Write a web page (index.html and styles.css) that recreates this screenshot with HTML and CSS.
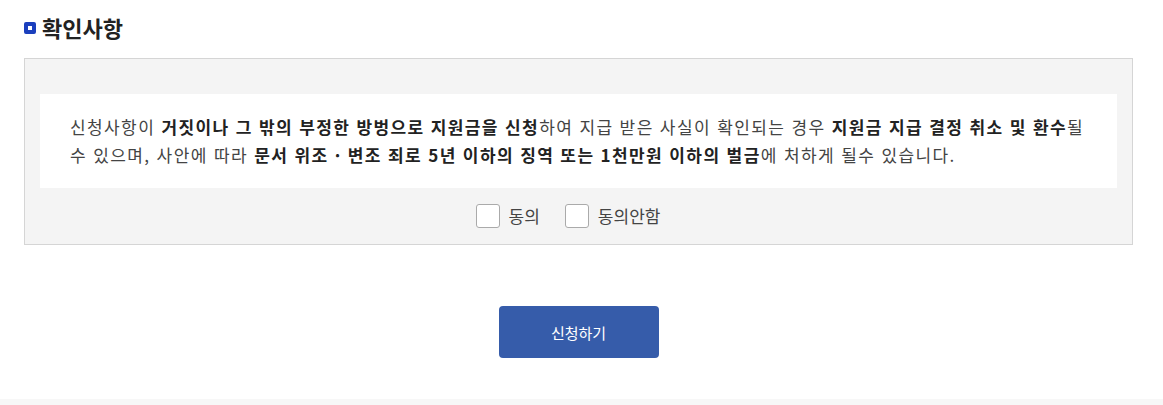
FILE: index.html
```html
<!DOCTYPE html>
<html lang="ko">
<head>
    <meta charset="UTF-8">
    <meta name="viewport" content="width=device-width, initial-scale=1.0">
    <title>확인사항</title>
    <link rel="stylesheet" href="styles.css">
</head>
<body>
    <div class="section">
        <h2 class="section-title"><span class="title-mark"></span>확인사항</h2>
        <div class="confirm-box">
            <p class="confirm-text">
                신청사항이 <b>거짓이나 그 밖의 부정한 방벙으로 지원금을 신청</b>하여 지급 받은 사실이 확인되는 경우 <b>지원금 지급 결정 취소 및 환수</b>될 수 있으며, 사안에 따라 <b>문서 위조 · 변조 죄로 5년 이하의 징역 또는 1천만원 이하의 벌금</b>에 처하게 될수 있습니다.
            </p>
            <div class="agree-row">
                <label class="agree-item"><input type="checkbox" name="agree"><span class="check"></span>동의</label>
                <label class="agree-item"><input type="checkbox" name="disagree"><span class="check"></span>동의안함</label>
            </div>
        </div>
        <div class="btn-area">
            <button type="button" class="btn-submit">신청하기</button>
        </div>
    </div>
    <div class="footer-band"></div>
</body>
</html>
```

FILE: styles.css
```css
body {
    margin: 0;
    font-family: "Noto Sans CJK KR", "Noto Sans", sans-serif;
    color: #333;
    background: #fff;
}

.section {
    padding: 13px 30px 0 24px;
}

.section-title {
    display: flex;
    align-items: center;
    gap: 6px;
    margin: 0 0 16px;
    font-size: 22px;
    font-weight: bold;
    line-height: 29px;
    color: #222;
}

.title-mark {
    width: 12px;
    height: 12px;
    box-sizing: border-box;
    border: 4px solid #1b3fbd;
    border-radius: 2px;
    background: #fff;
}

.confirm-box {
    background: #f4f4f4;
    border: 1px solid #d5d5d5;
    padding: 35px 15px 16px;
}

.confirm-text {
    margin: 0;
    background: #fff;
    padding: 19px 30px;
    font-size: 17px;
    line-height: 28px;
    letter-spacing: 1.4px;
    color: #444;
}

.confirm-text b {
    color: #222;
}

.agree-row {
    display: flex;
    justify-content: center;
    gap: 25px;
    margin-top: 16px;
    padding-right: 21px;
}

.agree-item {
    display: flex;
    align-items: center;
    gap: 9px;
    font-size: 17px;
    line-height: 24px;
    color: #444;
    cursor: pointer;
}

.agree-item input {
    display: none;
}

.check {
    width: 24px;
    height: 24px;
    box-sizing: border-box;
    border: 1px solid #aaa;
    border-radius: 3px;
    background: #fff;
}

.agree-item input:checked + .check {
    background: #365caa;
    border-color: #365caa;
}

.btn-area {
    display: flex;
    justify-content: center;
    padding: 61px 0 41px;
}

.btn-submit {
    width: 160px;
    height: 52px;
    border: 0;
    border-radius: 4px;
    background: #365caa;
    color: #fff;
    font-family: inherit;
    font-size: 15px;
    cursor: pointer;
}

.footer-band {
    height: 7px;
    background: #f7f7f7;
}
```
